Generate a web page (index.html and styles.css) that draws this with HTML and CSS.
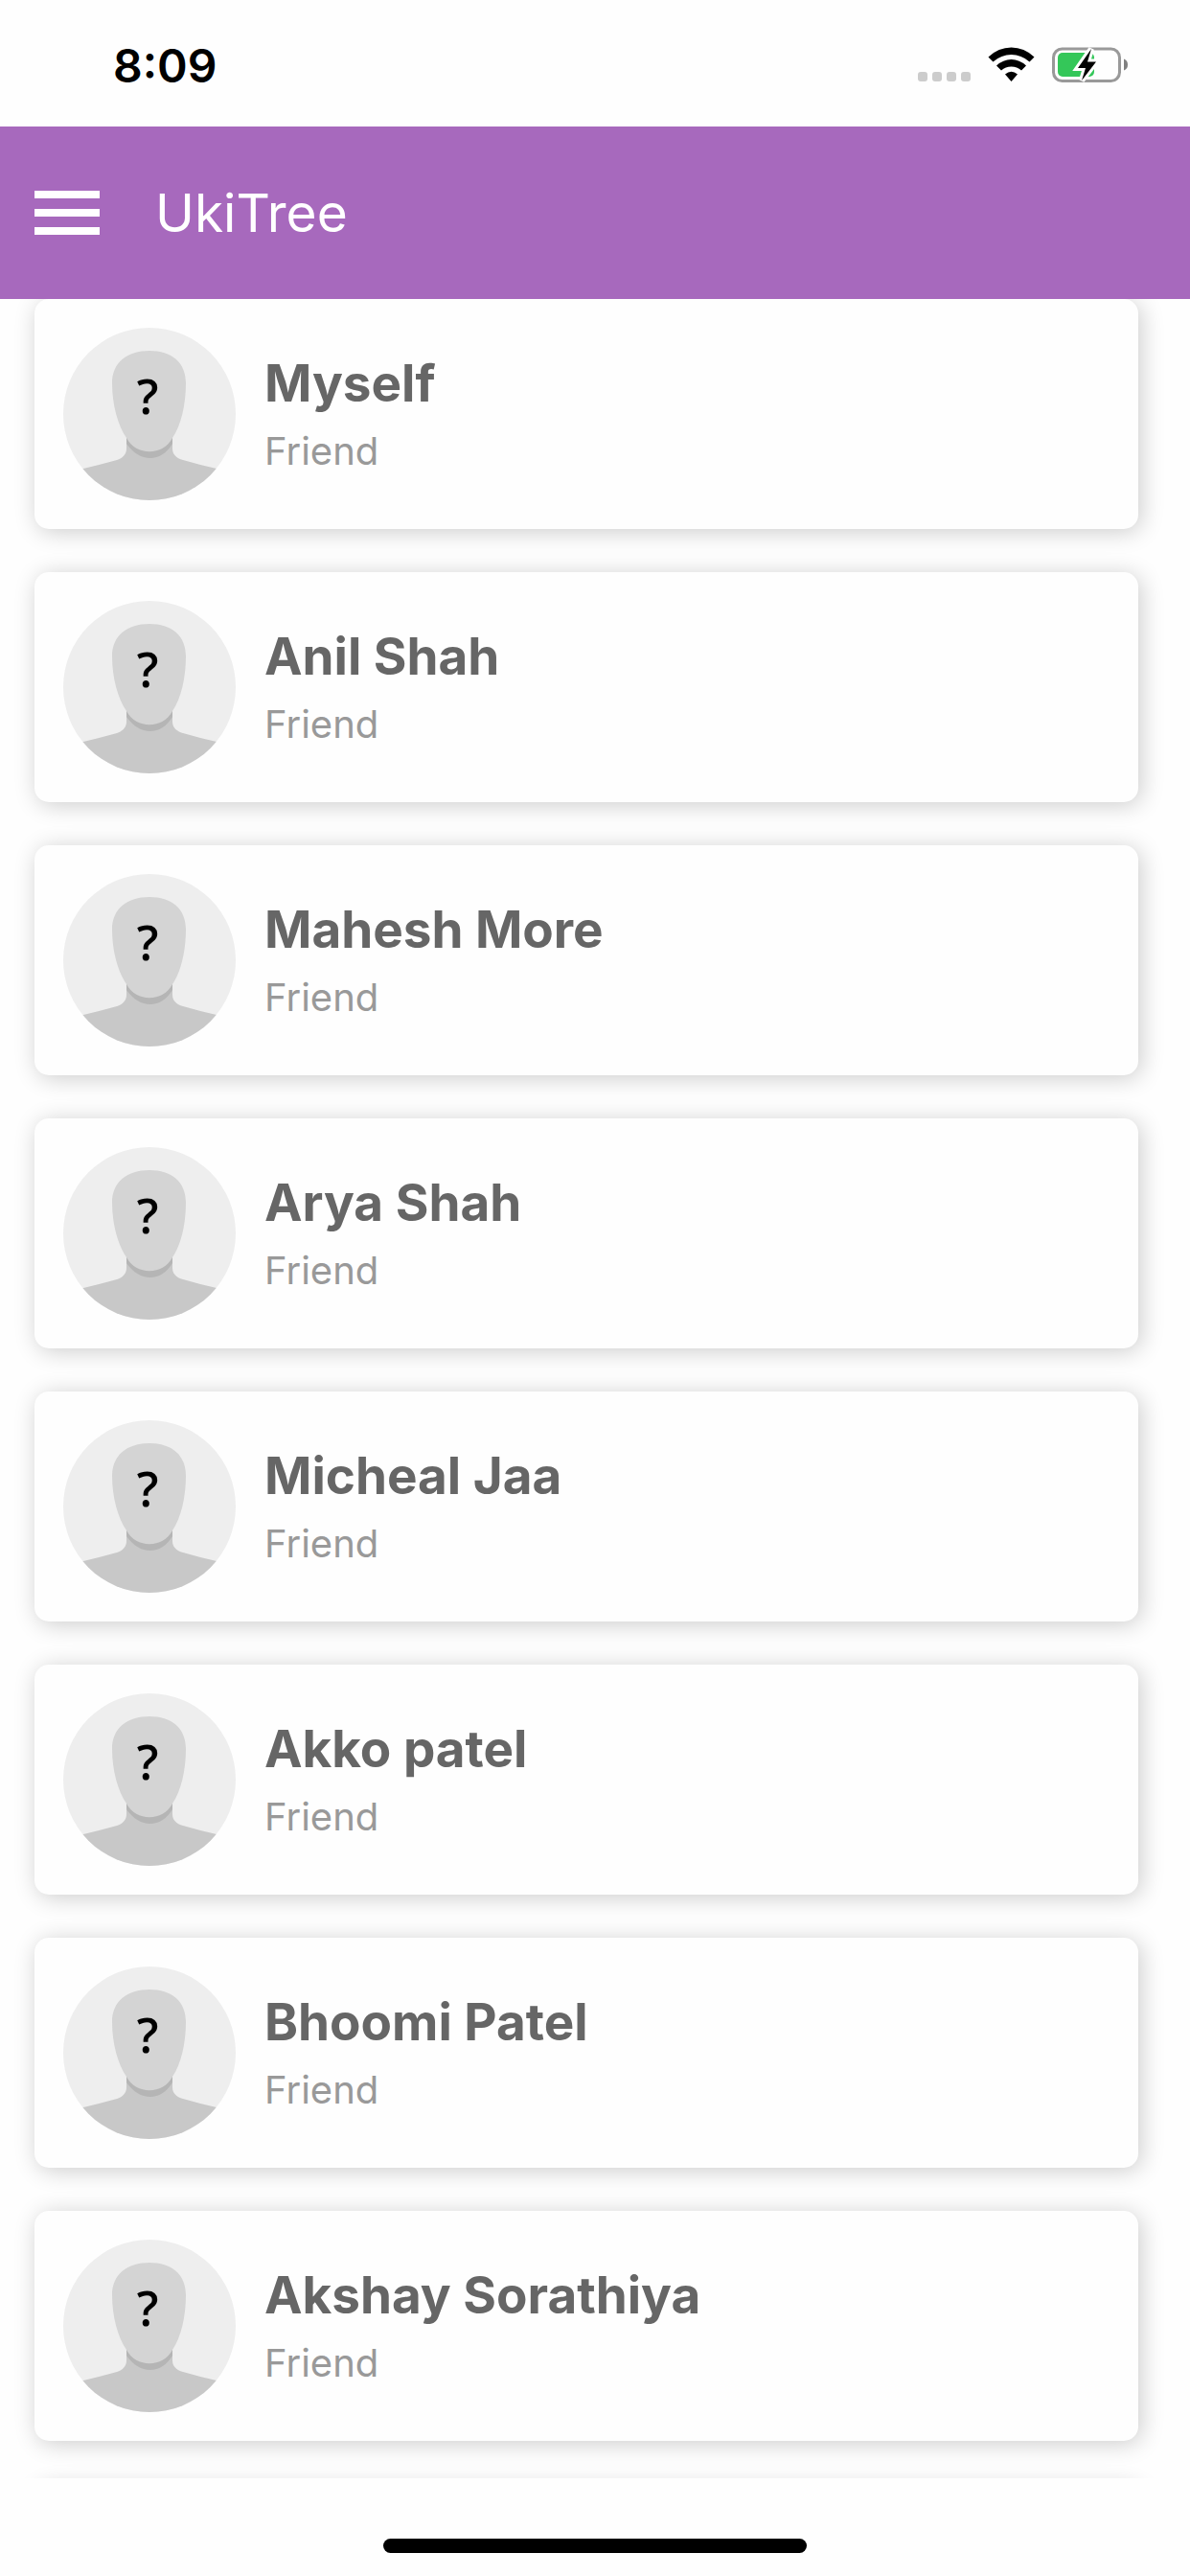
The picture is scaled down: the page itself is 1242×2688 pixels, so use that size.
FILE: index.html
```html
<!DOCTYPE html>
<html lang="en">
<head>
    <meta charset="UTF-8">
    <meta name="viewport" content="width=device-width, initial-scale=1.0">
    <title>UkiTree</title>
    <link rel="stylesheet" href="styles.css">
</head>
<body>
    <!-- Shared avatar placeholder -->
    <svg class="sprite" aria-hidden="true">
        <symbol id="avatar" viewBox="0 0 180 180">
            <rect width="180" height="180" fill="#eeeeee"/>
            <path d="M66 110V126C66 132 62 136 56 138Q38 143 21 147L0 152V180H180V152L160 147Q142 143 125 138C118 136 114 132 114 126V110Z" fill="#c8c8c8"/>
            <path d="M66 114V121C80 141 102 141 114 121V114Z" fill="#b5b5b5"/>
            <path d="M90 24C113 24 128 36 128 58C128 80 123 102 114 115C104 134 76 134 66 115C57 102 51 80 51 58C51 36 67 24 90 24Z" fill="#d4d4d4"/>
            <text x="88" y="90" class="avatar-mark">?</text>
        </symbol>
    </svg>

    <div class="status-bar">
        <div class="time">8:09</div>
        <svg class="status-icons" viewBox="0 0 220 38" aria-hidden="true">
            <g fill="#cccccc">
                <rect x="0" y="26" width="10" height="10" rx="3"/>
                <rect x="15" y="26" width="10" height="10" rx="3"/>
                <rect x="30" y="26" width="10" height="10" rx="3"/>
                <rect x="45" y="26" width="10" height="10" rx="3"/>
            </g>
            <path d="M73.500 10.500Q84 0.500 97.500 0.500Q111 0.500 121.500 10.500L116.500 15.500Q108 8 97.500 8Q87 8 78.500 15.500Z"/>
            <path d="M82 19.500Q89 13 97.500 13Q106 13 113 19.500L108 24.500Q103.500 20.500 97.500 20.500Q91.500 20.500 87 24.500Z"/>
            <path d="M91 28.500Q97.500 23 104 28.500L97.500 36Z"/>
            <rect x="141.500" y="2" width="69" height="33.500" rx="9" fill="none" stroke="#999999" stroke-width="3"/>
            <rect x="146" y="6" width="38" height="25" rx="5" fill="#34c759"/>
            <path d="M215 12.500Q219 14 219 18.500Q219 23 215 24.500Z" fill="#808080"/>
            <path d="M181 2L167 22H175L171 35L186 15.500H177Z" fill="#000000" stroke="#ffffff" stroke-width="6" paint-order="stroke"/>
        </svg>
    </div>

    <div class="navbar">
        <button class="menu-btn" aria-label="Menu">
            <span class="bar"></span>
            <span class="bar"></span>
            <span class="bar"></span>
        </button>
        <h1 class="title">UkiTree</h1>
    </div>

    <ul class="friends">
        <li class="friend-card">
            <svg class="avatar" aria-hidden="true"><use href="#avatar"/></svg>
            <div class="friend-content">
                <div class="friend-name">Myself</div>
                <div class="friend-info">Friend</div>
            </div>
        </li>
        <li class="friend-card">
            <svg class="avatar" aria-hidden="true"><use href="#avatar"/></svg>
            <div class="friend-content">
                <div class="friend-name">Anil Shah</div>
                <div class="friend-info">Friend</div>
            </div>
        </li>
        <li class="friend-card">
            <svg class="avatar" aria-hidden="true"><use href="#avatar"/></svg>
            <div class="friend-content">
                <div class="friend-name">Mahesh More</div>
                <div class="friend-info">Friend</div>
            </div>
        </li>
        <li class="friend-card">
            <svg class="avatar" aria-hidden="true"><use href="#avatar"/></svg>
            <div class="friend-content">
                <div class="friend-name">Arya Shah</div>
                <div class="friend-info">Friend</div>
            </div>
        </li>
        <li class="friend-card">
            <svg class="avatar" aria-hidden="true"><use href="#avatar"/></svg>
            <div class="friend-content">
                <div class="friend-name">Micheal Jaa</div>
                <div class="friend-info">Friend</div>
            </div>
        </li>
        <li class="friend-card">
            <svg class="avatar" aria-hidden="true"><use href="#avatar"/></svg>
            <div class="friend-content">
                <div class="friend-name">Akko patel</div>
                <div class="friend-info">Friend</div>
            </div>
        </li>
        <li class="friend-card">
            <svg class="avatar" aria-hidden="true"><use href="#avatar"/></svg>
            <div class="friend-content">
                <div class="friend-name">Bhoomi Patel</div>
                <div class="friend-info">Friend</div>
            </div>
        </li>
        <li class="friend-card">
            <svg class="avatar" aria-hidden="true"><use href="#avatar"/></svg>
            <div class="friend-content">
                <div class="friend-name">Akshay Sorathiya</div>
                <div class="friend-info">Friend</div>
            </div>
        </li>
        <li class="friend-card"></li>
    </ul>

    <div class="home-area">
        <div class="home-indicator"></div>
    </div>
</body>
</html>
```
FILE: styles.css
```css
* {
    box-sizing: border-box;
}
body {
    display: flex;
    flex-direction: column;
    height: 100vh;
    margin: 0;
    overflow: hidden;
    font-family: Inter, "Liberation Sans", sans-serif;
    background-color: #fefefe;
}
.sprite {
    display: none;
}
.status-bar {
    display: flex;
    flex-shrink: 0;
    justify-content: space-between;
    align-items: center;
    height: 132px;
    padding: 4px 64px 0 118px;
}
.time {
    font-size: 48px;
    font-weight: 600;
    color: #000;
}
.status-icons {
    width: 220px;
    height: 38px;
}
.navbar {
    display: flex;
    flex-shrink: 0;
    align-items: center;
    gap: 58px;
    height: 180px;
    padding: 0 36px;
    background-color: #a769bd;
}
.menu-btn {
    display: flex;
    flex-direction: column;
    gap: 11px;
    width: 68px;
    padding: 0;
    border: none;
    background: none;
    cursor: pointer;
}
.bar {
    height: 8px;
    background-color: #fff;
}
.title {
    margin: 0;
    font-size: 55px;
    font-weight: 400;
    color: #fff;
}
.friends {
    display: flex;
    flex: 1;
    flex-direction: column;
    gap: 45px;
    min-height: 0;
    margin: 0;
    padding: 0 54px 0 36px;
    overflow: hidden;
    list-style: none;
}
.friend-card {
    display: flex;
    flex-shrink: 0;
    align-items: center;
    gap: 30px;
    min-height: 240px;
    padding: 30px;
    border-radius: 15px;
    background-color: #fefefe;
    box-shadow: 3px 3px 24px rgba(0, 0, 0, 0.2);
}
.avatar {
    width: 180px;
    height: 180px;
    border-radius: 50%;
}
.avatar-mark {
    font-family: "Open Sans", sans-serif;
    font-size: 50px;
    font-weight: 600;
    text-anchor: middle;
    fill: #000;
}
.friend-name {
    margin-bottom: 14px;
    font-size: 53px;
    font-weight: 700;
    line-height: 64px;
    color: #666;
}
.friend-info {
    font-size: 40px;
    font-weight: 400;
    line-height: 50px;
    color: #999;
}
.home-area {
    display: flex;
    flex-shrink: 0;
    justify-content: center;
    align-items: flex-end;
    height: 102px;
    padding-bottom: 24px;
}
.home-indicator {
    width: 442px;
    height: 15px;
    border-radius: 8px;
    background-color: #000;
}
```
